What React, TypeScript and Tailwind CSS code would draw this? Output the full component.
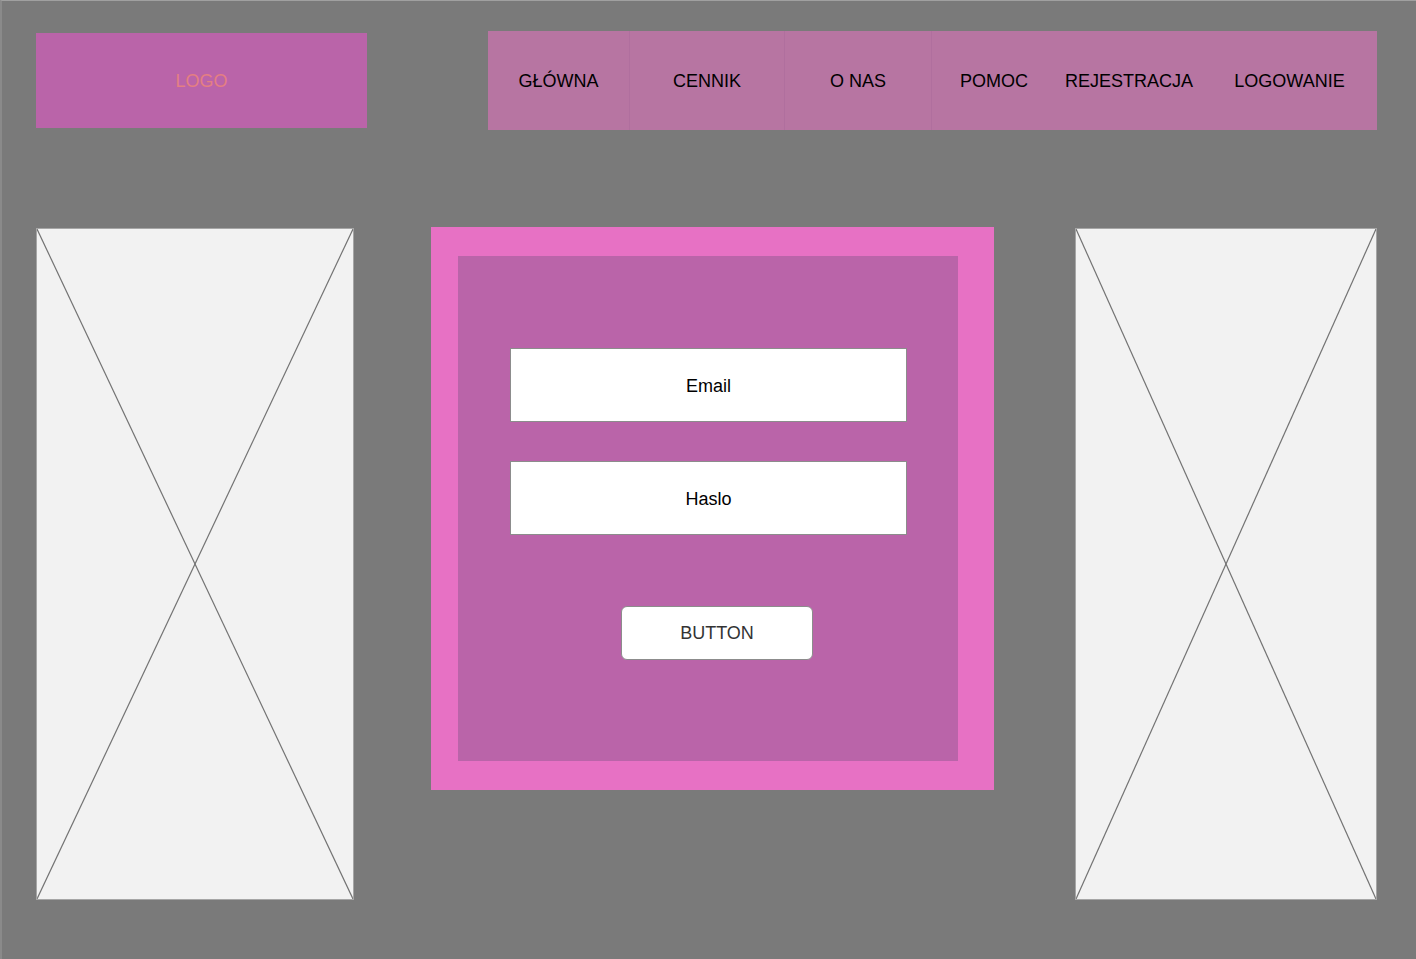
const navItems = [
    { label: "GŁÓWNA", w: "w-[142px]", divider: true },
    { label: "CENNIK", w: "w-[155px]", divider: true },
    { label: "O NAS", w: "w-[147px]", divider: true },
    { label: "POMOC", w: "w-[124px]", divider: false },
    { label: "REJESTRACJA", w: "w-[146px]", divider: false },
    { label: "LOGOWANIE", w: "w-[175px]", divider: false },
];

function Placeholder({ className }: { className: string }) {
    return (
        <div className={`relative bg-[#f2f2f2] border border-[#a6a6a6] ${className}`}>
            {/* Krzyzyk obrazka */}
            <svg className="absolute inset-0 w-full h-full" viewBox="0 0 100 100" preserveAspectRatio="none">
                <line x1="0" y1="0" x2="100" y2="100" stroke="#737373" strokeWidth="1.2" vectorEffect="non-scaling-stroke" />
                <line x1="100" y1="0" x2="0" y2="100" stroke="#737373" strokeWidth="1.2" vectorEffect="non-scaling-stroke" />
            </svg>
        </div>
    );
}

export default function App() {
    return (
        <div className="w-[1416px] h-[959px] bg-[#7a7a7a] border-t border-l-2 border-t-[#a0a0a0] border-l-[#8a8a8a] pl-[34px] pt-[30px] font-['Liberation_Sans',Arial,sans-serif] text-[18px]">
            {/* Naglowek */}
            <div className="flex items-start">
                <div className="w-[331px] h-[95px] mt-[2px] pt-[2px] bg-[#ba64a9] flex items-center justify-center text-[#e47f82]">
                    LOGO
                </div>
                <nav className="ml-[121px] w-[889px] h-[99px] bg-[#b775a2] flex">
                    {navItems.map((item) => (
                        <div
                            key={item.label}
                            className={`${item.w} h-full pt-[2px] flex items-center justify-center text-black ${item.divider ? "border-r border-[#b06f9e]" : ""}`}
                        >
                            {item.label}
                        </div>
                    ))}
                </nav>
            </div>

            {/* Zawartosc */}
            <div className="flex items-start mt-[97px]">
                <Placeholder className="w-[318px] h-[672px] mt-[1px]" />

                {/* Formularz logowania */}
                <div className="ml-[77px] w-[563px] h-[563px] bg-[#e771c4] pl-[27px] pt-[29px]">
                    <div className="w-[500px] h-[505px] bg-[#ba64a9] pt-[92px] pl-[52px] flex flex-col">
                        <div className="w-[397px] h-[74px] pt-[3px] bg-white border border-[#8c8c8c] flex items-center justify-center text-black">
                            Email
                        </div>
                        <div className="w-[397px] h-[74px] pt-[3px] mt-[39px] bg-white border border-[#8c8c8c] flex items-center justify-center text-black">
                            Haslo
                        </div>
                        <button className="ml-[111px] mt-[71px] w-[192px] h-[54px] bg-white border border-[#8c8c8c] rounded-[6px] text-[#333333]">
                            BUTTON
                        </button>
                    </div>
                </div>

                <Placeholder className="ml-[81px] w-[302px] h-[672px] mt-[1px]" />
            </div>
        </div>
    );
}
